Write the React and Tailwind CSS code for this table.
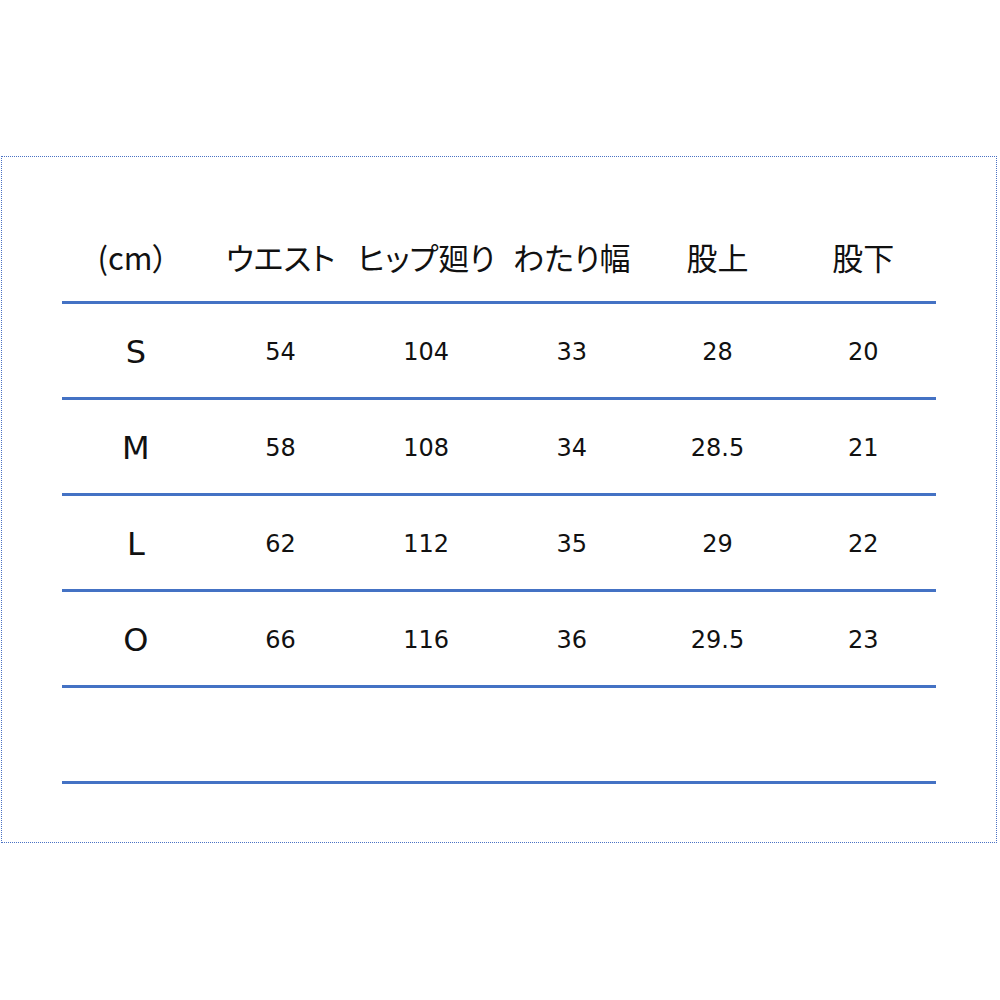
import React from 'react'

const headers = ['(cm）', 'ウエスト', 'ヒップ廻り', 'わたり幅', '股上', '股下']

const rows = [
  ['S', '54', '104', '33', '28', '20'],
  ['M', '58', '108', '34', '28.5', '21'],
  ['L', '62', '112', '35', '29', '22'],
  ['O', '66', '116', '36', '29.5', '23'],
  ['', '', '', '', '', ''],
]

const App = () => {
  return (
    <div className="w-[1000px] h-[1000px] bg-white pt-[156px] pl-[1px] text-[#111]">
      <div className="w-[996px] h-[687px] border border-dotted border-[#4a72c4] pl-[60px]">
        <div className="w-[874px] font-['Noto_Sans_CJK_JP',sans-serif] [font-feature-settings:'palt']">
          {/* header */}
          <div className="grid grid-cols-6 h-[144px] items-end pb-[29px] text-[31px] leading-[31px]">
            {headers.map((h, i) => (
              <div key={i} className={`text-center ${i === 0 ? 'pr-[4px]' : ''}`}>
                {h}
              </div>
            ))}
          </div>

          {/* size rows */}
          {rows.map((row, r) => (
            <div key={r} className="grid grid-cols-6 h-[96px] pt-[3px] border-t-[3px] border-[#4472c4] items-center">
              {row.map((cell, c) => (
                <div
                  key={c}
                  className={
                    c === 0
                      ? "text-center text-[32px] font-['DejaVu_Sans','Noto_Sans_CJK_JP',sans-serif] pl-[2px]"
                      : "text-center text-[24px] font-['DejaVu_Sans','Noto_Sans_CJK_JP',sans-serif]"
                  }
                >
                  {cell}
                </div>
              ))}
            </div>
          ))}
          <div className="border-t-[3px] border-[#4472c4]" />
        </div>
      </div>
    </div>
  )
}

export default App
